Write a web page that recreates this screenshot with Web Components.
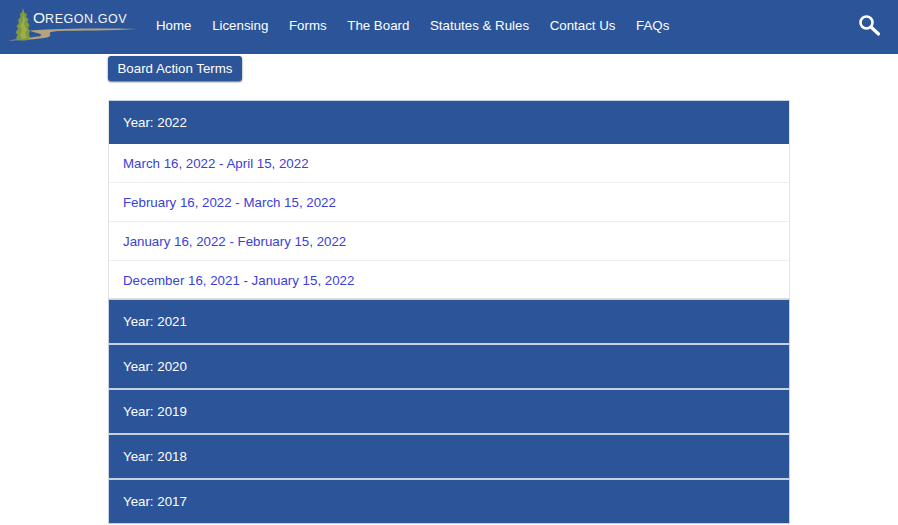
<!DOCTYPE html>
<html lang="en">
<head>
<meta charset="utf-8">
<title>Board Action Terms</title>
<style>
  html, body { margin: 0; padding: 0; background: #fff; height: 100%; overflow: hidden; }
  body { font-family: "Liberation Sans", Arial, sans-serif; font-size: 13.3px; color: #333; }
  main { display: block; padding: 2px 108px 0; }
</style>
</head>
<body>
<site-nav></site-nav>
<main>
  <term-button>Board Action Terms</term-button>
  <year-list>
    <year-panel year="2022" open>
      <term-link>March 16, 2022 - April 15, 2022</term-link>
      <term-link>February 16, 2022 - March 15, 2022</term-link>
      <term-link>January 16, 2022 - February 15, 2022</term-link>
      <term-link>December 16, 2021 - January 15, 2022</term-link>
    </year-panel>
    <year-panel year="2021"></year-panel>
    <year-panel year="2020"></year-panel>
    <year-panel year="2019"></year-panel>
    <year-panel year="2018"></year-panel>
    <year-panel year="2017"></year-panel>
  </year-list>
</main>

<script>
class SiteNav extends HTMLElement {
    constructor() {
        super();
        this.attachShadow({ mode: 'open' });
    }

    connectedCallback() {
        const links = ['Home', 'Licensing', 'Forms', 'The Board', 'Statutes & Rules', 'Contact Us', 'FAQs'];
        this.shadowRoot.innerHTML = `
        <style>
        :host {
            display: flex;
            align-items: center;
            height: 54px;
            background: #2c5499;
            color: #fff;
            box-sizing: border-box;
        }
        .logo {
            flex: none;
            width: 156px;
            height: 54px;
            position: relative;
        }
        .logo svg { position: absolute; left: 0; top: 0; }
        .logo span {
            position: absolute;
            left: 33px;
            top: 9px;
            font-size: 12.5px;
            line-height: 18px;
            letter-spacing: 0.55px;
            white-space: nowrap;
            color: #f4f6fa;
        }
        .logo b { font-weight: normal; font-size: 15.5px; letter-spacing: 0; }
        nav { display: flex; gap: 20.65px; margin-top: -2px; }
        a { color: #fff; text-decoration: none; font-size: 13.3px; line-height: 20px; white-space: nowrap; }
        .search { margin-left: auto; margin-right: 16px; margin-top: -2px; display: block; }
        </style>
        <div class="logo">
            <svg width="156" height="54" viewBox="0 0 156 54" aria-hidden="true">
                <path d="M8 40.5 C18 39 28 38 34 37 C39 36.5 42 36 41 34.5 C39 33 33 32.5 30 30.5 C60 28.5 100 28 137 29 C110 30.5 80 30.5 58 31 C52 31.5 49 32 50 34 C51 36.5 48 37.5 44 38 C34 39.5 18 40.5 8 40.5Z" fill="#b3a47c"/>
                <path d="M23 8 L24.5 13 L27 14 L26 17 L28.5 19 L27.5 22 L29.5 25 L28 28 L30 31 L29 34 L30 38 L26 40.5 L19 40.5 L16 38 L17.5 35 L15.5 32 L18 29 L16.5 26 L19 23 L18 20 L20.5 17 L20 14 L22 12Z" fill="#7f9a3b"/>
                <path d="M23 14 L25 20 L24 24 L27 30 L25 33 L27 38 L22 39 L20 35 L22 30 L20 26 L23 21Z" fill="#9bad4c"/>
            </svg>
            <span><b>O</b>REGON.GOV</span>
        </div>
        <nav>${links.map(l => `<a href="#">${l.replace('&', '&amp;')}</a>`).join('')}</nav>
        <svg class="search" width="24" height="24" viewBox="0 0 24 24" aria-label="Search" fill="none" stroke="#fff">
            <circle cx="8.5" cy="8.5" r="6" stroke-width="2.6"/>
            <path d="M13 13 L20.5 20" stroke-width="3.2" stroke-linecap="round"/>
        </svg>
        `;
    }
}

class TermButton extends HTMLElement {
    constructor() {
        super();
        this.attachShadow({ mode: 'open' });
    }

    connectedCallback() {
        this.shadowRoot.innerHTML = `
        <style>
        :host {
            display: table;
            box-sizing: border-box;
            height: 25px;
            width: 134px;
            text-align: center;
            background: #2c5499;
            color: #fff;
            font-size: 13.3px;
            line-height: 25px;
            border-radius: 3px;
            box-shadow: 0 1px 2px rgba(0,0,0,0.6);
            margin-bottom: 19px;
        }
        </style>
        <slot></slot>
        `;
    }
}

class YearList extends HTMLElement {
    constructor() {
        super();
        this.attachShadow({ mode: 'open' });
    }

    connectedCallback() {
        this.shadowRoot.innerHTML = `
        <style>
        :host { display: flex; flex-direction: column; width: 682px; }
        </style>
        <slot></slot>
        `;
    }
}

class YearPanel extends HTMLElement {
    constructor() {
        super();
        this.attachShadow({ mode: 'open' });
    }

    connectedCallback() {
        const open = this.hasAttribute('open');
        this.shadowRoot.innerHTML = `
        <style>
        :host {
            display: block;
            border: 1px solid #c9d0df;
            background: #fff;
        }
        :host([open]) { border-color: #c9d0df #e4e4e4 #dedede; }
        .head {
            background: #2c5499;
            color: #fff;
            font-size: 13.3px;
            line-height: 20px;
            height: 43px;
            box-sizing: border-box;
            padding: 12px 14px 11px;
        }
        .body { display: flex; flex-direction: column; }
        .body[hidden] { display: none; }
        </style>
        <div class="head">Year: ${this.getAttribute('year')}</div>
        <div class="body" ${open ? '' : 'hidden'}><slot></slot></div>
        `;
    }
}

class TermLink extends HTMLElement {
    constructor() {
        super();
        this.attachShadow({ mode: 'open' });
    }

    connectedCallback() {
        this.shadowRoot.innerHTML = `
        <style>
        :host {
            display: block;
            box-sizing: border-box;
            height: 39px;
            padding: 10px 14px 0;
            border-bottom: 1px solid #eee;
            font-size: 13.3px;
            line-height: 20px;
            color: #3b40d8;
        }
        :host(:last-child) { border-bottom: 0; height: 37px; }
        </style>
        <slot></slot>
        `;
    }
}

customElements.define('site-nav', SiteNav);
customElements.define('term-button', TermButton);
customElements.define('year-list', YearList);
customElements.define('year-panel', YearPanel);
customElements.define('term-link', TermLink);
</script>
</body>
</html>
